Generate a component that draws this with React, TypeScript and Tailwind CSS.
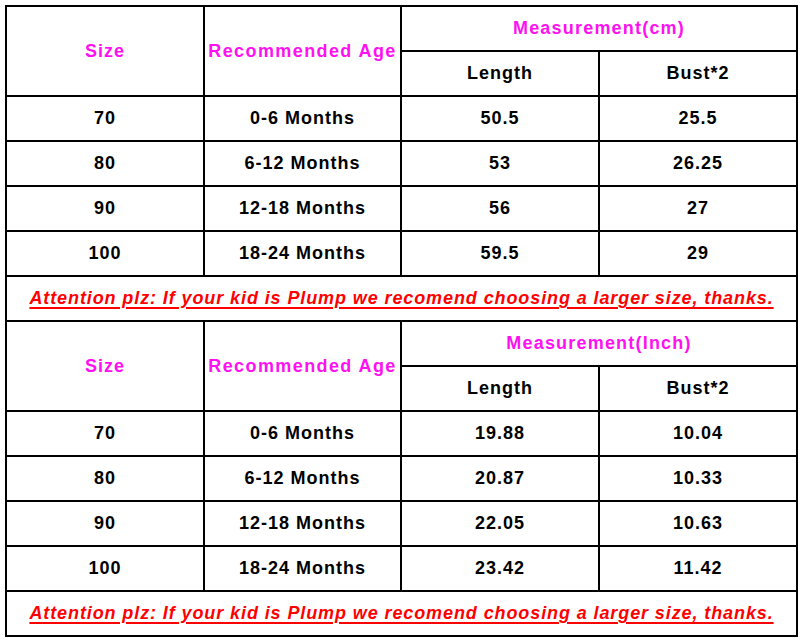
const cm = [
  ["70", "0-6 Months", "50.5", "25.5"],
  ["80", "6-12 Months", "53", "26.25"],
  ["90", "12-18 Months", "56", "27"],
  ["100", "18-24 Months", "59.5", "29"],
];

const inch = [
  ["70", "0-6 Months", "19.88", "10.04"],
  ["80", "6-12 Months", "20.87", "10.33"],
  ["90", "12-18 Months", "22.05", "10.63"],
  ["100", "18-24 Months", "23.42", "11.42"],
];

const cell = "bg-white flex items-center justify-center";

function Block({ unit, rows }: { unit: string; rows: string[][] }) {
  return (
    <>
      <div className={`${cell} row-span-2 text-[#ff10f0]`}>Size</div>
      <div className={`${cell} row-span-2 text-[#ff10f0] tracking-[1.4px]`}>Recommended Age</div>
      <div className={`${cell} col-span-2 pb-px text-[#ff10f0] tracking-[1.2px]`}>Measurement({unit})</div>
      <div className={cell}>Length</div>
      <div className={cell}>Bust*2</div>
      {rows.map((r) =>
        r.map((v, i) => (
          <div key={r[0] + i} className={cell}>
            {v}
          </div>
        ))
      )}
      <div className={`${cell} col-span-4 italic text-[#ff0000] tracking-[0.9px] underline decoration-[1.5px] underline-offset-[3px]`}>
        Attention plz: If your kid is Plump we recomend choosing a larger size, thanks.
      </div>
    </>
  );
}

export default function App() {
  return (
    <div className="w-[800px] h-[640px] bg-white pt-[5px] pl-[5px] font-['Liberation_Sans',Arial,sans-serif]">
      <div className="grid w-fit grid-cols-[196px_195px_196px_196px] grid-rows-[repeat(14,43px)] gap-[2px] bg-black p-[2px] text-[18px] font-bold tracking-[1px] text-black">
        <Block unit="cm" rows={cm} />
        <Block unit="Inch" rows={inch} />
      </div>
    </div>
  );
}
